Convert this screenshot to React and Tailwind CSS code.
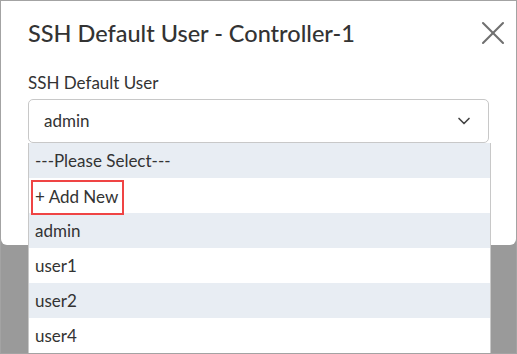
import { ChevronDown, X } from 'lucide-react';

const options = [
  { id: 1, label: '---Please Select---', shade: true },
  { id: 2, label: '+ Add New', shade: false, boxed: true },
  { id: 3, label: 'admin', shade: true },
  { id: 4, label: 'user1', shade: false },
  { id: 5, label: 'user2', shade: true },
  { id: 6, label: 'user4', shade: false },
];

export default function App() {
  return (
    <div
      className="relative w-[517px] h-[354px] overflow-hidden border border-[#a3a3a3] bg-[#9a9a9a] text-[#333]"
      style={{ fontFamily: 'Lato, "Open Sans", sans-serif' }}
    >
      {/* Modal */}
      <div className="h-[244px] bg-white rounded-b-[6px] px-[27px] pt-[17px]">
        <div className="flex items-center justify-between h-[30px]">
          <h2 className="text-[23.5px] leading-[30px] font-medium text-[#333]">SSH Default User - Controller-1</h2>
          <button type="button" className="-mr-[24px] text-[#707070]">
            <X className="w-[40px] h-[40px]" strokeWidth={1.25} />
          </button>
        </div>
        <label className="block mt-[24px] text-[17px] leading-[22px] text-[#333]">SSH Default User</label>
        <div className="mt-[5px] h-[44px] flex items-center justify-between border border-[#c8c8c8] rounded-[5px] pl-[15px] pr-[14px]">
          <span className="text-[17px] text-[#333]">admin</span>
          <ChevronDown className="w-[20px] h-[20px] text-[#444]" strokeWidth={2} />
        </div>
      </div>

      {/* Dropdown menu */}
      <ul className="absolute left-[27px] top-[142px] w-[463px] border-x border-[#c8c8c8] bg-white">
        {options.map((opt) => (
          <li
            key={opt.id}
            className={`h-[35px] flex items-center pl-[2px] text-[17px] text-[#333] ${opt.shade ? 'bg-[#e8edf3]' : 'bg-white'}`}
          >
            {opt.boxed ? (
              <span className="border-2 border-[#ef4444] pl-[2px] pr-[4px] h-[35px] mt-[3px] flex items-center">{opt.label}</span>
            ) : (
              <span className="pl-[4px]">{opt.label}</span>
            )}
          </li>
        ))}
      </ul>
    </div>
  );
}
